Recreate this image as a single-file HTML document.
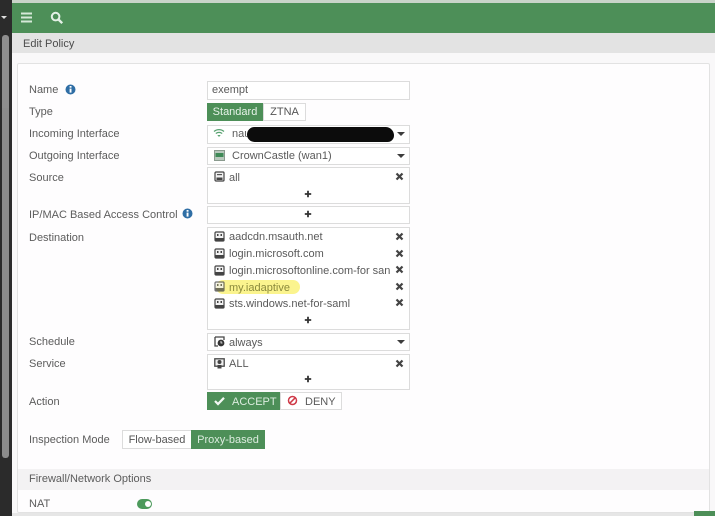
<!DOCTYPE html>
<html style="overflow:hidden;width:715px;height:516px">
<head>
<meta charset="utf-8">
<style>
html,body{margin:0;padding:0}
body{width:715px;height:516px;position:relative;overflow:hidden;background:#f9f8f9;font-family:"Liberation Sans",sans-serif;font-size:11px;color:#5a5a5a}
#w{position:absolute;left:0;top:0;width:715px;height:516px;overflow:hidden;filter:blur(.35px)}
.a{position:absolute}
.l{position:absolute;left:29px;line-height:14px;white-space:nowrap;color:#5c5c5c}
.box{position:absolute;left:207px;width:201px;background:#fff;border:1px solid #dcdcdc}
.t{position:absolute;line-height:14px;white-space:nowrap;color:#5a5a5a}
.x{position:absolute;left:395px;width:9px;height:9px}
.p{position:absolute;left:304px;width:8px;height:8px}
.ic{position:absolute;left:214px;width:11px;height:11px}
.car{position:absolute;left:397px;width:0;height:0;border-left:4px solid transparent;border-right:4px solid transparent;border-top:4px solid #3c3c3c}
</style>
</head>
<body>
<svg width="0" height="0" style="position:absolute">
<defs>
<symbol id="x" viewBox="0 0 9 9"><path d="M1.5 1.5L7.5 7.5M7.5 1.5L1.5 7.5" stroke="#444" stroke-width="2.2" fill="none"/></symbol>
<symbol id="p" viewBox="0 0 8 8"><path d="M4 .8V7.2M.8 4H7.2" stroke="#333" stroke-width="1.8" fill="none"/></symbol>
<symbol id="addr" viewBox="0 0 11 11"><rect x="1" y="1" width="9" height="9" rx="1" fill="#f2f2f2" stroke="#444" stroke-width="1.2"/><rect x="2.5" y="6.5" width="6" height="2.5" fill="#444"/><rect x="3" y="3" width="5" height="1.2" fill="#555"/></symbol>
<symbol id="fq" viewBox="0 0 11 11"><rect x="1" y="1" width="9" height="9" rx="1" fill="#f2f2f2" stroke="#444" stroke-width="1.2"/><rect x="1.5" y="7" width="8" height="2.5" fill="#444"/><rect x="3" y="3" width="1.5" height="2" fill="#444"/><rect x="6.5" y="3" width="1.5" height="2" fill="#444"/></symbol>
</defs>
</svg>
<div id="w">

<!-- left dark strip -->
<div class="a" style="left:0;top:0;width:12px;height:516px;background:#2b2b2b"></div>
<div class="a" style="left:2px;top:35px;width:7px;height:73px;background:#8e8e8e;border-radius:3px 3px 0 0"></div>
<div class="a" style="left:2px;top:108px;width:7px;height:350px;background:#8c8c8c;border-radius:0 0 3px 3px"></div>
<div class="a" style="left:1px;top:16px;width:0;height:0;border-left:3px solid transparent;border-right:3px solid transparent;border-top:3px solid #ddd"></div>

<!-- top bar -->
<div class="a" style="left:12px;top:0;width:703px;height:3px;background:#c9d4c9"></div>
<div class="a" style="left:12px;top:3px;width:703px;height:30px;background:#4d8f58"></div>
<svg class="a" style="left:21px;top:12px" width="12" height="11" viewBox="0 0 12 11"><path d="M0 1.5H11M0 5.5H11M0 9.5H11" stroke="#d5e8d8" stroke-width="2"/></svg>
<svg class="a" style="left:50px;top:11px" width="14" height="14" viewBox="0 0 14 14"><circle cx="5.6" cy="5.6" r="3.8" fill="none" stroke="#e4f0e6" stroke-width="2"/><path d="M8.5 8.5L12.2 12.2" stroke="#e4f0e6" stroke-width="2.4"/></svg>

<!-- breadcrumb -->
<div class="a" style="left:12px;top:33px;width:703px;height:20px;background:#e3e3e3"></div>
<div class="t" style="left:23px;top:37px;color:#4c4c4c">Edit Policy</div>

<!-- panel -->
<div class="a" style="left:17px;top:63px;width:693px;height:450px;box-sizing:border-box;border:1px solid #e2e2e2;border-radius:2px;background:#fefdfe"></div>

<!-- labels -->
<div class="l" style="top:83px">Name</div>
<svg class="a" style="left:65px;top:84px" width="11" height="11" viewBox="0 0 11 11"><circle cx="5.5" cy="5.5" r="5" fill="#2f6ea5"/><rect x="4.6" y="2" width="1.9" height="1.7" fill="#fff"/><rect x="4.6" y="4.6" width="1.9" height="4" fill="#fff"/></svg>
<div class="l" style="top:105px">Type</div>
<div class="l" style="top:127px">Incoming Interface</div>
<div class="l" style="top:149px">Outgoing Interface</div>
<div class="l" style="top:171px">Source</div>
<div class="l" style="top:208px">IP/MAC Based Access Control</div>
<svg class="a" style="left:182px;top:208px" width="11" height="11" viewBox="0 0 11 11"><circle cx="5.5" cy="5.5" r="5" fill="#2f6ea5"/><rect x="4.6" y="2" width="1.9" height="1.7" fill="#fff"/><rect x="4.6" y="4.6" width="1.9" height="4" fill="#fff"/></svg>
<div class="l" style="top:231px">Destination</div>
<div class="l" style="top:335px">Schedule</div>
<div class="l" style="top:357px">Service</div>
<div class="l" style="top:395px">Action</div>
<div class="l" style="top:433px">Inspection Mode</div>

<!-- name -->
<div class="box" style="top:81px;height:17px"></div>
<div class="t" style="left:212px;top:83px">exempt</div>

<!-- type -->
<div class="a" style="left:207px;top:103px;width:56px;height:18px;background:#4d8f58;color:#e6f2e8;line-height:19px;text-align:center">Standard</div>
<div class="a" style="left:263px;top:103px;width:41px;height:16px;background:#fff;border:1px solid #dcdcdc;line-height:17px;text-align:center;color:#555">ZTNA</div>

<!-- incoming -->
<div class="box" style="top:125px;height:17px"></div>
<svg class="a" style="left:213px;top:129px" width="12" height="9" viewBox="0 0 12 9"><path d="M1 2.5C4 0 8 0 11 2.5M2.8 4.5C5 3 7 3 9.2 4.5" stroke="#5aa372" stroke-width="1.2" fill="none"/><path d="M4.3 6L6 8L7.7 6Z" fill="#5aa372"/></svg>
<div class="t" style="left:232px;top:127px">nau</div>
<div class="a" style="left:247px;top:127px;width:147px;height:15px;background:#0c0c0c;border-radius:8px 9px 7px 8px"></div>
<div class="car" style="top:132px"></div>

<!-- outgoing -->
<div class="box" style="top:147px;height:16px"></div>
<svg class="a" style="left:214px;top:150px" width="11" height="11" viewBox="0 0 11 11"><rect x=".5" y=".5" width="10" height="10" fill="#b9c9bd" stroke="#8a9a8e"/><rect x="1.5" y="3" width="8" height="4" fill="#3f8a57"/></svg>
<div class="t" style="left:232px;top:149px">CrownCastle (wan1)</div>
<div class="car" style="top:154px"></div>

<!-- source -->
<div class="box" style="top:167px;height:35px"></div>
<svg class="ic" style="top:171px"><use href="#addr"/></svg>
<div class="t" style="left:229px;top:171px">all</div>
<svg class="x" style="top:172px"><use href="#x"/></svg>
<svg class="p" style="top:190px"><use href="#p"/></svg>

<!-- ip/mac -->
<div class="box" style="top:206px;height:16px"></div>
<svg class="p" style="top:210px"><use href="#p"/></svg>

<!-- destination -->
<div class="box" style="top:227px;height:101px"></div>
<div class="a" style="left:216px;top:280px;width:84px;height:14px;background:#fbf48e;border-radius:7px"></div>
<svg class="ic" style="top:231px"><use href="#fq"/></svg>
<div class="t" style="left:229px;top:230px">aadcdn.msauth.net</div>
<svg class="x" style="top:232px"><use href="#x"/></svg>
<svg class="ic" style="top:248px"><use href="#fq"/></svg>
<div class="t" style="left:229px;top:247px">login.microsoft.com</div>
<svg class="x" style="top:249px"><use href="#x"/></svg>
<svg class="ic" style="top:265px"><use href="#fq"/></svg>
<div class="t" style="left:229px;top:264px;width:162px;overflow:hidden">login.microsoftonline.com-for san</div>
<svg class="x" style="top:265px"><use href="#x"/></svg>
<svg class="ic" style="top:281px;opacity:.75"><use href="#fq"/></svg>
<div class="t" style="left:229px;top:281px;color:#8b8a3c">my.iadaptive</div>
<svg class="x" style="top:282px"><use href="#x"/></svg>
<svg class="ic" style="top:298px"><use href="#fq"/></svg>
<div class="t" style="left:229px;top:297px">sts.windows.net-for-saml</div>
<svg class="x" style="top:298px"><use href="#x"/></svg>
<svg class="p" style="top:316px"><use href="#p"/></svg>

<!-- schedule -->
<div class="box" style="top:333px;height:16px"></div>
<svg class="ic" style="top:336px" viewBox="0 0 11 11"><path d="M1 1H10V4M1 1V10H4" stroke="#444" stroke-width="1.3" fill="none"/><circle cx="7" cy="7" r="3.4" fill="#333"/><path d="M7 5V7H8.5" stroke="#fff" stroke-width=".8" fill="none"/></svg>
<div class="t" style="left:229px;top:336px">always</div>
<div class="car" style="top:340px"></div>

<!-- service -->
<div class="box" style="top:354px;height:34px"></div>
<svg class="ic" style="top:358px" viewBox="0 0 11 11"><rect x=".8" y=".8" width="9.4" height="7.4" fill="#eee" stroke="#444" stroke-width="1.3"/><circle cx="5.5" cy="4" r="2" fill="#444"/><path d="M3.5 10.5V7H7.5V10.5Z" fill="#444"/></svg>
<div class="t" style="left:229px;top:357px">ALL</div>
<svg class="x" style="top:359px"><use href="#x"/></svg>
<svg class="p" style="top:375px"><use href="#p"/></svg>

<!-- action -->
<div class="a" style="left:207px;top:392px;width:73px;height:18px;background:#4d8f58"></div>
<svg class="a" style="left:214px;top:396px" width="11" height="10" viewBox="0 0 11 10"><path d="M1 5L4 8L10 1.8" stroke="#f2f8f3" stroke-width="2.2" fill="none"/></svg>
<div class="t" style="left:232px;top:395px;color:#dcecdf">ACCEPT</div>
<div class="a" style="left:280px;top:392px;width:60px;height:16px;background:#fff;border:1px solid #dcdcdc"></div>
<svg class="a" style="left:287px;top:395px" width="11" height="11" viewBox="0 0 11 11"><circle cx="5.5" cy="5.5" r="4" fill="none" stroke="#cf3a48" stroke-width="1.5"/><path d="M2.8 8.2L8.2 2.8" stroke="#cf3a48" stroke-width="1.5"/></svg>
<div class="t" style="left:305px;top:395px">DENY</div>

<!-- inspection -->
<div class="a" style="left:122px;top:430px;width:68px;height:17px;background:#fff;border:1px solid #dcdcdc;line-height:19px;text-align:center;color:#555">Flow-based</div>
<div class="a" style="left:191px;top:430px;width:74px;height:19px;background:#4d8f58;color:#dcecdf;line-height:21px;text-align:center">Proxy-based</div>

<!-- firewall section -->
<div class="a" style="left:18px;top:469px;width:691px;height:21px;background:#f3f2f3"></div>
<div class="l" style="top:472px">Firewall/Network Options</div>
<div class="l" style="top:497px">NAT</div>
<div class="a" style="left:137px;top:499px;width:15px;height:10px;background:#4d9a5c;border-radius:5px"></div>
<div class="a" style="left:145px;top:501px;width:6px;height:6px;background:#fff;border-radius:50%"></div>

<!-- bottom edge -->
<div class="a" style="left:12px;top:513px;width:703px;height:3px;background:#e6e6e6"></div>
<div class="a" style="left:694px;top:511px;width:21px;height:5px;background:#4d8f58"></div>
</div>
</body>
</html>
